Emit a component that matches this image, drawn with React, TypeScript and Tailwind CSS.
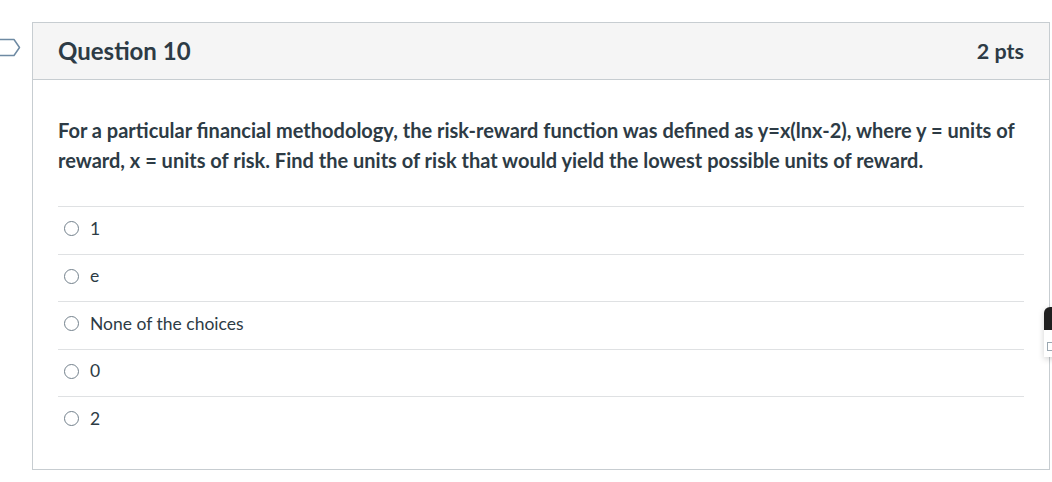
import React from "react";

const answers = ["1", "e", "None of the choices", "0", "2"];

function Radio() {
  return (
    <span className="inline-block w-[15px] h-[15px] rounded-full border border-[#73818c] bg-white shrink-0" />
  );
}

export default function App() {
  return (
    <div className="relative w-[1052px] h-[482px] bg-white overflow-hidden text-[#2d3b45] font-['Lato','Noto_Sans',sans-serif]">
      {/* flag marker on the left */}
      <svg className="absolute left-0 top-[38px]" width="22" height="20" viewBox="0 0 22 20">
        <path d="M-2 1.5 H14 L19.5 9.5 L14 17.5 H-2" fill="white" stroke="#6e8aa3" strokeWidth="1.5" strokeLinejoin="round" />
      </svg>

      <div className="pt-[22px] pl-[32px]">
        <div className="w-[1018px] border border-[#c7cdd1]">
          <div className="h-[57px] bg-[#f5f5f5] border-b border-[#c7cdd1] flex items-center justify-between px-[25px]">
            <span className="text-[24px] font-bold">Question 10</span>
            <span className="text-[21.5px] font-bold">2 pts</span>
          </div>
          <div className="px-[25px] pt-[35px] pb-[25px]">
            <p className="text-[20px] font-bold leading-[30px]">
              For a particular financial methodology, the risk-reward function was defined as y=x(lnx-2), where y = units of reward, x = units of risk. Find the units of risk that would yield the lowest possible units of reward.
            </p>
            <div className="mt-[31px]">
              {answers.map((a) => (
                <div key={a} className="h-[47.5px] border-t border-[#dfe1e3] flex items-center gap-[11px] pl-[6px] pb-[3px] text-[17.5px]">
                  <Radio />
                  <span>{a}</span>
                </div>
              ))}
            </div>
          </div>
        </div>
      </div>

      {/* partially visible side panel */}
      <div className="absolute left-[1044px] top-[307px] w-[20px] h-[50px] rounded-tl-[6px] overflow-hidden shadow-[0_2px_6px_rgba(0,0,0,0.18)] bg-white">
        <div className="h-[23px] bg-[#1f1f1f]" />
        <div className="pt-[12px] pl-[3px]">
          <span className="block w-[9px] h-[9px] border border-[#9aa7b1]" />
        </div>
      </div>
    </div>
  );
}
